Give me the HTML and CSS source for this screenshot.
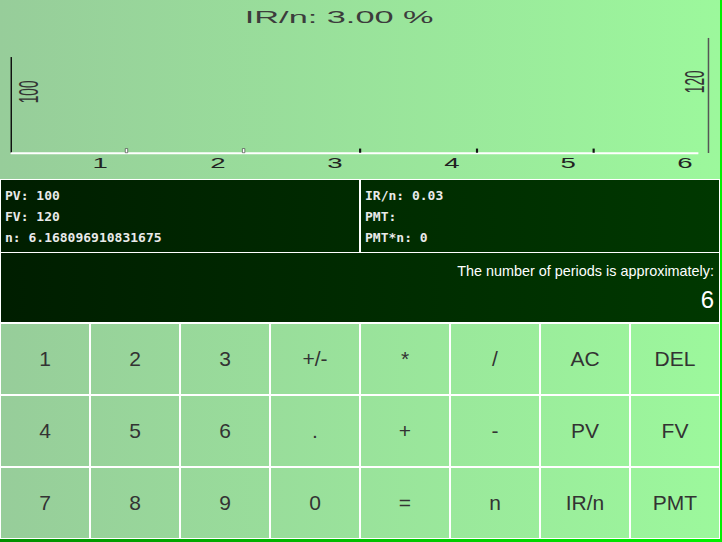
FILE: index.html
```html
<!DOCTYPE html>
<html>
<head>
<meta charset="utf-8">
<title>Calculator</title>
<link rel="stylesheet" href="styles.css">
</head>
<body>
<div class="app">
  <div class="chart">
    <svg width="720" height="179" viewBox="0 0 300 150" preserveAspectRatio="none">
      <text class="title" x="102" y="19">IR/n: 3.00 %</text>
      <line x1="4.7" y1="47.8" x2="4.7" y2="128.2" stroke="#111" stroke-width="1.5" vector-effect="non-scaling-stroke"/>
      <line x1="295.2" y1="31.8" x2="295.2" y2="128.2" stroke="#555" stroke-width="1.5" vector-effect="non-scaling-stroke"/>
      <line x1="4.4" y1="128.4" x2="291" y2="128.4" stroke="#fff" stroke-width="2" vector-effect="non-scaling-stroke"/>
      <rect x="52.2" y="124.5" width="1" height="3.5" fill="#fff" stroke="#333" stroke-width="0.6" vector-effect="non-scaling-stroke"/>
      <rect x="101" y="124.5" width="1" height="3.5" fill="#fff" stroke="#333" stroke-width="0.6" vector-effect="non-scaling-stroke"/>
      <rect x="149.6" y="124.5" width="0.9" height="3.5" fill="#111"/>
      <rect x="198.3" y="124.5" width="0.9" height="3.5" fill="#111"/>
      <rect x="246.9" y="124.5" width="0.9" height="3.5" fill="#111"/>
      <text class="lbl" x="41.7" y="141">1</text>
      <text class="lbl" x="90.8" y="141">2</text>
      <text class="lbl" x="139.6" y="141">3</text>
      <text class="lbl" x="188.3" y="141">4</text>
      <text class="lbl" x="236.7" y="141">5</text>
      <text class="lbl" x="285.4" y="141">6</text>
      <text class="lbl rot" transform="translate(15.9,77) rotate(-90)">100</text>
      <text class="lbl rot" transform="translate(293.4,68.5) rotate(-90)">120</text>
    </svg>
  </div>
  <div class="info">
    <div class="cell">
      <div>PV: 100</div>
      <div>FV: 120</div>
      <div>n: 6.168096910831675</div>
    </div>
    <div class="cell">
      <div>IR/n: 0.03</div>
      <div>PMT:</div>
      <div>PMT*n: 0</div>
    </div>
  </div>
  <div class="result">
    <div class="msg">The number of periods is approximately:</div>
    <div class="val">6</div>
  </div>
  <div class="keys">
    <button class="key">1</button>
    <button class="key">2</button>
    <button class="key">3</button>
    <button class="key">+/-</button>
    <button class="key">*</button>
    <button class="key">/</button>
    <button class="key">AC</button>
    <button class="key">DEL</button>
    <button class="key">4</button>
    <button class="key">5</button>
    <button class="key">6</button>
    <button class="key">.</button>
    <button class="key">+</button>
    <button class="key">-</button>
    <button class="key">PV</button>
    <button class="key">FV</button>
    <button class="key">7</button>
    <button class="key">8</button>
    <button class="key">9</button>
    <button class="key">0</button>
    <button class="key">=</button>
    <button class="key">n</button>
    <button class="key">IR/n</button>
    <button class="key">PMT</button>
  </div>
</div>
</body>
</html>
```

FILE: styles.css
```css
html, body {
  margin: 0;
  padding: 0;
}

body {
  width: 722px;
  height: 542px;
  overflow: hidden;
  background: linear-gradient(90deg, #008f00, #00f000);
  font-family: "Liberation Sans", Arial, sans-serif;
}

.app {
  width: 720px;
  height: 539px;
  display: flex;
  flex-direction: column;
  background: linear-gradient(90deg, #97cd9a, #9cf89c);
}

.chart {
  height: 179px;
  flex: none;
}

.chart svg {
  display: block;
}

.title {
  font-family: "Liberation Sans", Arial, sans-serif;
  font-size: 14.3px;
  fill: #3c3c3c;
}

.lbl {
  font-family: "Liberation Sans", Arial, sans-serif;
  font-size: 11.5px;
  fill: #222;
  text-anchor: middle;
}

.rot {
  font-size: 11.5px;
  fill: #333;
}

.info {
  flex: none;
  height: 74px;
  display: grid;
  grid-template-columns: 360px 360px;
  background: linear-gradient(90deg, #001e00, #003800);
}

.cell {
  box-sizing: border-box;
  border: 1px solid #fff;
  padding: 5px 4px 0;
  font-family: "DejaVu Sans Mono", monospace;
  font-weight: bold;
  font-size: 13px;
  line-height: 21px;
  color: #eaeaea;
}

.result {
  flex: none;
  box-sizing: border-box;
  height: 70px;
  border: 1px solid #fff;
  border-top: 0;
  padding: 8px 5px 0;
  text-align: right;
  color: #fff;
  background: linear-gradient(90deg, #001e00, #003800);
}

.msg {
  font-size: 14.4px;
  line-height: 20px;
}

.val {
  margin-top: 5px;
  font-size: 24px;
  line-height: 28px;
}

.keys {
  flex: none;
  display: grid;
  grid-template-columns: repeat(8, 90px);
  grid-template-rows: repeat(3, 72px);
}

.key {
  box-sizing: border-box;
  margin: 0;
  padding: 0;
  border: 1px solid #fff;
  background: transparent;
  font-family: "Liberation Sans", Arial, sans-serif;
  font-size: 21px;
  color: #333;
}
```
